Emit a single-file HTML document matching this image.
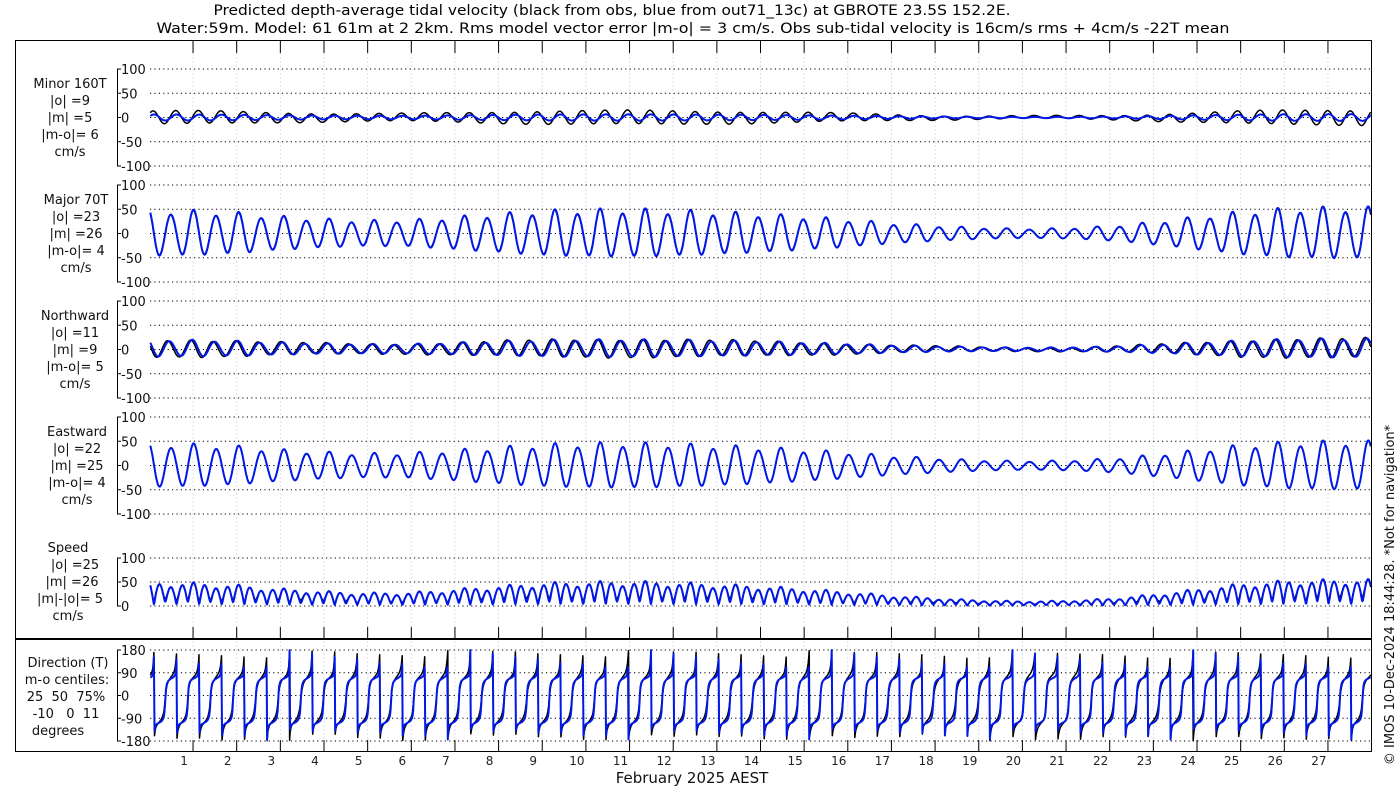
<!DOCTYPE html>
<html><head><meta charset="utf-8"><style>
html,body{margin:0;padding:0;background:#fff;}
svg{display:block;font-family:"DejaVu Sans","Liberation Sans",sans-serif;}
text{white-space:pre;}
</style></head><body>
<svg id="s" width="1400" height="800" viewBox="0 0 1400 800" xmlns="http://www.w3.org/2000/svg">
<rect width="1400" height="800" fill="#fff"/>
<text x="612" y="15" font-size="14" text-anchor="middle" textLength="797" lengthAdjust="spacingAndGlyphs">Predicted depth-average tidal velocity (black from obs, blue from out71_13c) at GBROTE 23.5S 152.2E.</text>
<text x="693" y="33" font-size="14" text-anchor="middle" textLength="1073" lengthAdjust="spacingAndGlyphs">Water:59m. Model: 61 61m at 2 2km. Rms model vector error |m-o| = 3 cm/s. Obs sub-tidal velocity is 16cm/s rms + 4cm/s -22T mean</text>
<g id="grid"></g>
<g id="data"></g>
<rect x="15.5" y="40.5" width="1356" height="711" fill="none" stroke="#000" stroke-width="1"/>
<line x1="15" y1="639" x2="1372" y2="639" stroke="#000" stroke-width="2"/>
<g font-size="13" text-anchor="middle" fill="#111">
<text x="70" y="88">Minor 160T</text><text x="70" y="105">|o| =9</text><text x="70" y="122">|m| =5</text><text x="70" y="139">|m-o|= 6</text><text x="70" y="156">cm/s</text>
<text x="76" y="204">Major 70T</text><text x="76" y="221">|o| =23</text><text x="76" y="238">|m| =26</text><text x="76" y="255">|m-o|= 4</text><text x="76" y="272">cm/s</text>
<text x="75" y="320">Northward</text><text x="75" y="337">|o| =11</text><text x="75" y="354">|m| =9</text><text x="75" y="371">|m-o|= 5</text><text x="75" y="388">cm/s</text>
<text x="77" y="436">Eastward</text><text x="77" y="453">|o| =22</text><text x="77" y="470">|m| =25</text><text x="77" y="487">|m-o|= 4</text><text x="77" y="504">cm/s</text>
<text x="68" y="552">Speed</text><text x="75" y="569">|o| =25</text><text x="72" y="586">|m| =26</text><text x="70" y="603">|m|-|o|= 5</text><text x="68" y="620">cm/s</text>
<text x="68" y="667">Direction (T)</text><text x="67" y="684">m-o centiles:</text><text x="66" y="701">25  50  75%</text><text x="66" y="718">-10   0  11</text><text x="58" y="735">degrees</text>
</g>
<g id="ylab" font-size="13" fill="#111"></g>
<g id="xlab" font-size="12" fill="#222" text-anchor="middle"></g>
<text x="692" y="783" font-size="15" text-anchor="middle" fill="#111">February 2025 AEST</text>
<text transform="translate(1394,595) rotate(-90)" font-size="13" text-anchor="middle" fill="#111">© IMOS 10-Dec-2024 18:44:28. *Not for navigation*</text>
</svg>
<script>
(function(){
var NS="http://www.w3.org/2000/svg";
function el(p,t,a,txt){var e=document.createElementNS(NS,t);for(var k in a)e.setAttribute(k,a[k]);if(txt!=null)e.textContent=txt;document.getElementById(p).appendChild(e);return e;}
var X0=149.4,DX=43.65,XR=1371;
function xp(t){return X0+t*DX;}
var P={
minor:[100,-100,69,166,[100,50,0,-50,-100]],
major:[100,-100,185,282,[100,50,0,-50,-100]],
north:[100,-100,301,398,[100,50,0,-50,-100]],
east:[100,-100,417,514,[100,50,0,-50,-100]],
speed:[100,0,558,606,[100,50,0]],
dir:[180,-180,650,741,[180,90,0,-90,-180]]};
function yp(p,v){var a=P[p];return a[2]+(a[0]-v)/(a[0]-a[1])*(a[3]-a[2]);}
for(var d=1;d<=27;d++){var x=xp(d);
 el("grid","line",{x1:x,y1:41,x2:x,y2:751,stroke:"#dcdcf0","stroke-width":1,"stroke-dasharray":"2,2"});
 el("grid","line",{x1:x,y1:41,x2:x,y2:53,stroke:"#000"});
 el("grid","line",{x1:x,y1:627,x2:x,y2:639,stroke:"#000"});
 el("grid","line",{x1:x,y1:740,x2:x,y2:751,stroke:"#000"});
 el("xlab","text",{x:x-9,y:765},String(d));
}
for(var k in P){var a=P[k];
 el("grid","line",{x1:117.5,y1:a[2],x2:117.5,y2:a[3],stroke:"#000"});
 a[4].forEach(function(v){var y=yp(k,v);
  el("grid","line",{x1:117,y1:y,x2:121,y2:y,stroke:"#000"});
  el("grid","line",{x1:150,y1:y,x2:XR,y2:y,stroke:"#000","stroke-dasharray":"1.2,3.2"});
  el("ylab","text",{x:121,y:y+5},String(v));
 });
}
var env=[[0,45],[1,44],[2,40],[3,33],[4,28],[5,25],[6,26],[7,32],[8,38],[9,44],[10,46],[11,47],[12,45],[13,42],[14,38],[15,33],[16,27],[17,20],[18,15],[19,11],[20,9],[21,10],[22,14],[23,22],[24,32],[25,42],[26,48],[27,50],[28,50]];
function A(t){for(var i=0;i<env.length-1;i++){if(t<=env[i+1][0]){var f=(t-env[i][0])/(env[i+1][0]-env[i][0]);return env[i][1]+f*(env[i+1][1]-env[i][1]);}}return 50;}
var w=2*Math.PI/0.5175;
function comp(t,obs){
 var a=A(t);var ph=w*t+0.3+(obs?0.05:0);
 var di=1+0.12*Math.cos(2*Math.PI*t/1.035);
 var M=a*di*Math.cos(ph)*(obs?0.97:1.0);
 var mi=(obs?0.3:0.14)*a*Math.sin(ph+(obs?0.2:0))+(obs?1.5*Math.sin(t*1.3):0);
 var e=M*0.940+mi*0.342, n=M*0.342-mi*0.940;
 var s=0.06*a; e+=-0.3*s; n+=0.9*s;
 var sp=Math.sqrt(e*e+n*n);
 var dr=Math.atan2(e,n)*180/Math.PI;
 return {minor:mi,major:M,north:n,east:e,speed:sp,dir:dr};
}
var keys=["minor","major","north","east","speed","dir"];
var end=(XR-X0)/DX;
[true,false].forEach(function(obs){
 var pts={};keys.forEach(function(k){pts[k]=[];});
 for(var t=0.02;t<=end;t+=0.012){var c=comp(t,obs);
  keys.forEach(function(k){pts[k].push(xp(t).toFixed(1)+","+yp(k,c[k]).toFixed(1));});}
 keys.forEach(function(k){el("data","polyline",{points:pts[k].join(" "),fill:"none",stroke:obs?"#000":"#0018e8","stroke-width":obs?1.5:2,"stroke-linejoin":"round"});});
});
})();
</script>
</body></html>
